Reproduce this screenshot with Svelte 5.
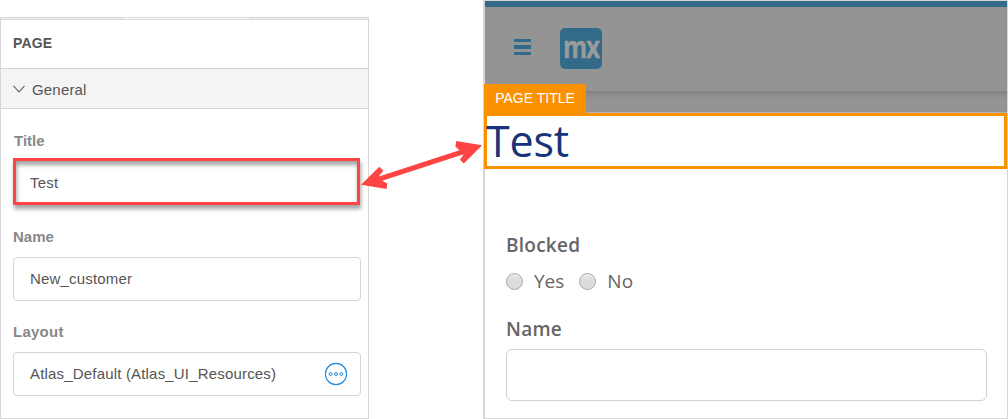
<script>
  let title = $state('Test');
  const layoutName = 'Atlas_Default (Atlas_UI_Resources)';
  const options = ['Yes', 'No'];
</script>

<main>
  <section class="properties">
    <div class="tabs"><i></i><i class="active"></i><i></i></div>
    <header>PAGE</header>
    <div class="group">
      <svg width="12" height="8" viewBox="0 0 12 8"><path d="M.5 .9 6 6.9 11.5.9" fill="none" stroke="#666" stroke-width="1.1" /></svg>
      <span>General</span>
    </div>
    <div class="fields">
      <div class="label first">Title</div>
      <div class="field highlighted">{title}</div>
      <div class="label second">Name</div>
      <div class="field">New_customer</div>
      <div class="label third">Layout</div>
      <div class="field">
        <span>{layoutName}</span>
        <svg class="more" width="24" height="24" viewBox="0 0 24 24" fill="none" stroke="#2089dc">
          <circle cx="12" cy="12" r="10.6" stroke-width="1.1" />
          <circle cx="6.6" cy="12" r="1.5" /><circle cx="12" cy="12" r="1.5" /><circle cx="17.4" cy="12" r="1.5" />
        </svg>
      </div>
    </div>
  </section>

  <section class="preview">
    <div class="accent"></div>
    <div class="topbar">
      <div class="menu"><i></i><i></i><i></i></div>
      <div class="logo"><span>mx</span></div>
    </div>
    <div class="shade"><div class="tag">PAGE TITLE</div></div>
    <div class="title">{title}</div>
    <div class="form">
      <div class="caption">Blocked</div>
      <div class="radios">
        {#each options as option}
          <span class="option"><i></i><b>{option}</b></span>
        {/each}
      </div>
      <div class="caption name">Name</div>
      <div class="entry"></div>
    </div>
  </section>

  <svg class="arrow" width="124" height="50" viewBox="360 140 124 50">
    <path fill="#ff4444" d="M361 184.8 379.3 166.8 383.3 170.6 378.8 176.4 459.4 150.2 455.4 146.5 456.2 141 482.2 145.2 463.7 163.6 459.9 159.8 463.8 154.3 382.2 180.8 387.2 183.4 386.6 189Z" />
  </svg>
</main>

<style>
  :global(body) { background: #fff; }
  main {
    position: relative;
    display: flex;
    justify-content: space-between;
    width: 1008px;
    height: 419px;
    overflow: hidden;
    font-family: "Liberation Sans", Arial, sans-serif;
  }
  * { box-sizing: border-box; }
  .properties {
    width: 369px;
    height: 402px;
    margin-top: 17px;
    border: 1px solid #d6d6d6;
    font-size: 15px;
    letter-spacing: .18px;
    color: #555;
  }
  .tabs { display: flex; height: 2px; border-bottom: 1px solid #d6d6d6; }
  .tabs i { flex: 1; background: #f4f4f4; }
  .tabs .active { flex: 0 0 131px; background: #fff; border: solid #d6d6d6; border-width: 0 1px; }
  .tabs i:first-child { flex: 0 0 120px; }
  header {
    height: 49px;
    padding-left: 12px;
    border-bottom: 1px solid #d6d6d6;
    font-size: 14px;
    font-weight: bold;
    line-height: 47px;
  }
  .group {
    display: flex;
    align-items: center;
    gap: 7px;
    height: 40px;
    padding-left: 12px;
    border-bottom: 1px solid #d6d6d6;
    background: #f4f4f4;
    line-height: 39px;
  }
  .group span { padding-top: 2px; }
  .fields { padding: 0 7px 0 12px; }
  .label { font-weight: bold; color: #888; line-height: 18px; letter-spacing: 0; }
  .label.first { height: 26px; margin-top: 23px; padding-left: 1px; }
  .label.second { height: 29px; margin-top: 23px; }
  .label.third { height: 29px; margin-top: 22px; letter-spacing: .25px; }
  .field {
    display: flex;
    align-items: center;
    justify-content: space-between;
    width: 348px;
    height: 44px;
    padding: 0 12px 0 16px;
    border: 1px solid #d6d6d6;
    border-radius: 4px;
    line-height: 18px;
  }
  .field.highlighted {
    width: 347px;
    height: 47px;
    padding: 3px 14px 0;
    border: 3px solid #ff4444;
    border-radius: 0;
    box-shadow: 1px 4px 4px rgba(0,0,0,.36), inset 1px 4px 4px rgba(0,0,0,.36);
  }
  .preview {
    width: 525px;
    height: 419px;
    border: 1px solid #d6d6d6;
    border-left-width: 2px;
    font-family: "Open Sans", sans-serif;
    color: #666;
  }
  .accent { height: 6px; background: #316b89; }
  .topbar {
    display: flex;
    align-items: flex-start;
    height: 84px;
    padding: 21px 0 0 29px;
    background: #949494;
  }
  .menu { display: flex; flex-direction: column; gap: 3px; width: 17px; margin: 11px 29px 0 0; }
  .menu i { height: 3px; background: #316b89; }
  .menu i:nth-child(2) { height: 4px; }
  .logo {
    display: flex;
    justify-content: center;
    width: 42px;
    height: 41px;
    border-radius: 5px;
    background: #316b89;
    color: #9a9a9a;
    font: bold 30px/37px "Open Sans", sans-serif;
  }
  .logo span { transform: scaleX(.82); letter-spacing: -1.4px; -webkit-text-stroke: .4px #9a9a9a; }
  .shade {
    position: relative;
    height: 22px;
    border-bottom: 1px solid #b3b3b3;
    background: linear-gradient(#838383, #8d8d8d 4px, #949494 8px);
  }
  .tag {
    position: absolute;
    left: -1px;
    top: -7px;
    width: 102px;
    height: 30px;
    background: #fa9200;
    color: #fff;
    font: 14px/29px "Liberation Sans", Arial, sans-serif;
    text-align: center;
  }
  .title {
    position: relative;
    width: 523px;
    height: 56px;
    margin-left: -1px;
    border: 3px solid #fa9200;
    color: #17347b;
    font-size: 43px;
    line-height: 50px;
    letter-spacing: -.2px;
    text-indent: -1px;
  }
  .form { padding: 63px 20px 0 21px; }
  .caption { height: 27px; font-size: 19px; font-weight: 600; line-height: 26px; letter-spacing: .25px; }
  .radios { display: flex; gap: 15px; height: 43px; padding-top: 9px; }
  .option { display: flex; align-items: center; gap: 11px; height: 27px; font-size: 19px; }
  .option b { padding-bottom: 2px; font-weight: 400; }
  .option i {
    width: 17px;
    height: 17px;
    border: 1px solid #a8a8a8;
    border-radius: 50%;
    background: linear-gradient(#eee, #dcdcdc 40%, #ddd);
  }
  .caption.name { margin-top: 14px; height: 33px; }
  .entry { height: 52px; border: 1px solid #d1d1d1; border-radius: 6px; }
  .arrow { position: absolute; left: 360px; top: 140px; }
</style>
